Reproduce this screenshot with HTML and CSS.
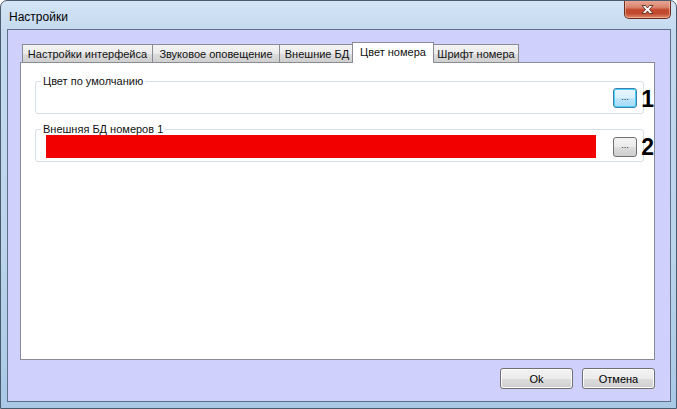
FILE: index.html
```html
<!DOCTYPE html>
<html lang="ru">
<head>
<meta charset="utf-8">
<title>Настройки</title>
<link rel="stylesheet" href="styles.css">
</head>
<body>
<div class="window">
  <div class="titlebar">
    <span class="title">Настройки</span>
    <button class="close" aria-label="Закрыть">
      <svg width="17" height="11" viewBox="0 0 17 11">
        <path d="M3 1.5 L6.5 1.5 L8.5 4 L10.5 1.5 L14 1.5 L10.5 5.5 L14 9.5 L10.5 9.5 L8.5 7 L6.5 9.5 L3 9.5 L6.5 5.5 Z" fill="#fff" stroke="#5b2a20" stroke-width="0.9" stroke-linejoin="round"/>
      </svg>
    </button>
  </div>
  <div class="client">
    <div class="tabs">
      <div class="tab tab-iface">Настройки интерфейса</div>
      <div class="tab tab-sound">Звуковое оповещение</div>
      <div class="tab tab-db">Внешние БД</div>
      <div class="tab tab-color active">Цвет номера</div>
      <div class="tab tab-font">Шрифт номера</div>
    </div>
    <div class="panel">
      <fieldset class="group">
        <legend>Цвет по умолчанию</legend>
        <div class="row">
          <button class="dots focused">...</button>
        </div>
        <span class="mark">1</span>
      </fieldset>
      <fieldset class="group group2">
        <legend>Внешняя БД номеров 1</legend>
        <div class="row">
          <div class="swatch"></div>
          <button class="dots">...</button>
        </div>
        <span class="mark">2</span>
      </fieldset>
    </div>
    <div class="actions">
      <button class="btn">Ok</button>
      <button class="btn">Отмена</button>
    </div>
  </div>
</div>
</body>
</html>
```
FILE: styles.css
```css
* { box-sizing: border-box; }
html, body { margin: 0; padding: 0; background: #fff; }
body {
  font-family: "Liberation Sans", Arial, sans-serif;
  font-size: 11px;
  color: #000;
}
.window {
  width: 677px;
  height: 409px;
  display: flex;
  flex-direction: column;
  background: linear-gradient(180deg, #d3e5f6 0%, #c4d9ef 8%, #bcd4ec 60%, #a9c8e6 100%);
  border: 1px solid #4b5b6e;
  border-radius: 7px 7px 0 0;
  overflow: hidden;
}
.titlebar {
  height: 28px;
  display: flex;
  align-items: flex-start;
  justify-content: space-between;
  flex: none;
}
.title {
  margin: 9px 0 0 8px;
  font-size: 12px;
  color: #000;
}
.close {
  width: 47px;
  height: 19px;
  margin: -1px 5px 0 0;
  padding: 0;
  border: 1px solid #6b2d22;
  border-top: none;
  border-radius: 0 0 5px 5px;
  background: linear-gradient(180deg, #e9a997 0%, #d98670 40%, #c4472c 55%, #c04a30 75%, #de8a6a 100%);
  box-shadow: inset 0 0 0 1px rgba(255,210,190,0.5);
  display: flex;
  align-items: center;
  justify-content: center;
}
.client {
  flex: 1;
  margin: 0 5px 6px 6px;
  background: #d0d0fd;
  border: 1px solid #5d7087;
  display: flex;
  flex-direction: column;
  padding: 12px 15px 12px 12px;
}
.tabs {
  display: flex;
  align-items: flex-end;
  height: 21px;
  margin: 0 0 -1px 2px;
  position: relative;
  z-index: 1;
}
.tab {
  height: 18px;
  margin-bottom: 1px;
  padding: 0 4px;
  border: 1px solid #898c95;
  border-bottom: none;
  margin-right: -1px;
  background: linear-gradient(180deg, #f3f3f3 0%, #ebebeb 50%, #dddddd 51%, #cfcfcf 100%);
  display: flex;
  align-items: center;
  justify-content: center;
  white-space: nowrap;
  color: #111;
}
.tab-iface { width: 131px; }
.tab-sound { width: 128px; }
.tab-db { width: 76px; }
.tab-color { width: 82px; }
.tab-font { width: 86px; }
.tab.active {
  height: 21px;
  margin-bottom: 0;
  margin-left: -2px;
  margin-right: -1px;
  padding: 0 4px 2px;
  background: #fff;
  position: relative;
  z-index: 2;
}
.panel {
  flex: 1;
  background: #fff;
  border: 1px solid #898c95;
  padding: 11px 10px 0 14px;
  display: flex;
  flex-direction: column;
  gap: 8px;
}
.group {
  position: relative;
  margin: 0;
  border: 1px solid #d5dfe5;
  border-radius: 3px;
  padding: 0 6px 5px 10px;
  min-width: 0;
}
.group legend {
  padding: 0 2px;
  margin-left: -5px;
  line-height: 14px;
  font-size: 11px;
  color: #111;
}
.row {
  display: flex;
  align-items: center;
  height: 20px;
}
.group2 { padding-bottom: 3px; }
.group2 .row { height: 23px; margin-top: -1px; }
.swatch {
  flex: 1;
  height: 23px;
  background: #f20000;
  margin-right: 17px;
}
.dots {
  margin-left: auto;
  width: 24px;
  height: 20px;
  padding: 0 0 3px;
  font-family: "Liberation Sans", Arial, sans-serif;
  font-size: 9px;
  color: #222;
  border: 1px solid #707070;
  border-radius: 3px;
  background: linear-gradient(180deg, #f2f2f2 0%, #ebebeb 50%, #dddddd 51%, #cfcfcf 100%);
}
.dots.focused {
  border-color: #3c7fb1;
  background: linear-gradient(180deg, #eaf6fd 0%, #d9f0fc 50%, #bee6fd 51%, #a7d9f5 100%);
  box-shadow: inset 0 0 0 1px #48d0f7;
}
.mark {
  position: absolute;
  right: -11px;
  bottom: 4px;
  font-family: "Liberation Sans", Arial, sans-serif;
  font-weight: bold;
  font-size: 23px;
  line-height: 20px;
  color: #000;
}
.actions {
  display: flex;
  justify-content: flex-end;
  gap: 9px;
  margin-top: 8px;
}
.btn {
  width: 73px;
  height: 21px;
  padding: 0;
  font-family: "Liberation Sans", Arial, sans-serif;
  font-size: 11px;
  color: #000;
  border: 1px solid #707070;
  border-radius: 3px;
  background: linear-gradient(180deg, #f2f2f2 0%, #ebebeb 50%, #dddddd 51%, #cfcfcf 100%);
  box-shadow: inset 0 0 0 1px #fcfcfc;
}
```
